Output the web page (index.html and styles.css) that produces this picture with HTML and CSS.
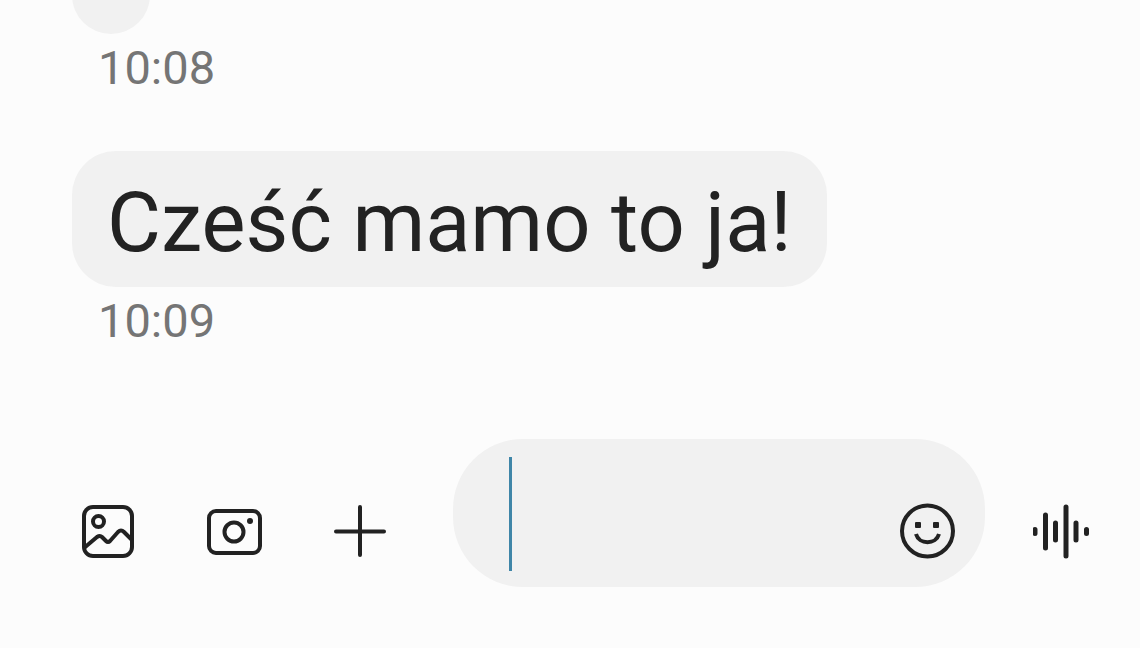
FILE: index.html
```html
<!DOCTYPE html>
<html lang="pl">
<head>
    <meta charset="UTF-8">
    <meta name="viewport" content="width=device-width, initial-scale=1.0">
    <title>Wiadomości</title>
    <link rel="stylesheet" href="styles.css">
</head>
<body>
    <!-- Messages -->
    <main class="messages">
        <div class="message">
            <div class="bubble bubble-small"></div>
            <time class="time" datetime="10:08">10:08</time>
        </div>
        <div class="message">
            <p class="bubble">Cześć mamo to ja!</p>
            <time class="time" datetime="10:09">10:09</time>
        </div>
    </main>

    <!-- Message bar -->
    <form class="composer">
        <div class="tools">
            <button class="icon-button" type="button" aria-label="Galeria">
                <svg viewBox="0 0 56 56" fill="none" stroke="currentColor" stroke-width="4" stroke-linejoin="round">
                    <rect x="4" y="4" width="48" height="49" rx="9"/>
                    <circle cx="18.500" cy="18.500" r="5.500"/>
                    <path d="M4 45l13-11q3-2 5 0l4 4q2 2 4 0l8-9q3-3 6 0l8 8"/>
                </svg>
            </button>
            <button class="icon-button" type="button" aria-label="Aparat">
                <svg viewBox="0 0 56 56" fill="none" stroke="currentColor" stroke-width="4">
                    <rect x="3" y="8" width="51" height="42" rx="7"/>
                    <circle cx="28" cy="29" r="9.500"/>
                    <circle cx="44" cy="18" r="3" fill="currentColor" stroke="none"/>
                </svg>
            </button>
            <button class="icon-button" type="button" aria-label="Dodaj">
                <svg viewBox="0 0 56 56" fill="none" stroke="currentColor" stroke-width="4" stroke-linecap="round">
                    <path d="M28 4v48M4 28.500h48"/>
                </svg>
            </button>
        </div>

        <div class="field">
            <span class="caret"></span>
            <input class="input" type="text" aria-label="Wiadomość">
            <button class="icon-button" type="button" aria-label="Emotikony">
                <svg viewBox="0 0 56 56" fill="none" stroke="currentColor" stroke-width="4">
                    <circle cx="28.500" cy="28" r="25.500"/>
                    <path d="M17 31c3 11 20 11 23 0"/>
                    <rect x="16" y="19" width="6" height="6" rx="1" fill="currentColor" stroke="none"/>
                    <rect x="34" y="19" width="6" height="6" rx="1" fill="currentColor" stroke="none"/>
                </svg>
            </button>
        </div>

        <button class="icon-button" type="button" aria-label="Wiadomość głosowa">
            <svg viewBox="0 0 56 56" fill="none" stroke="currentColor" stroke-width="5" stroke-linecap="round">
                <path d="M2 26.500v4M12.500 12v33M22.500 20v17M33 4v49M43 20v17M53.500 26.500v4"/>
            </svg>
        </button>
    </form>
</body>
</html>
```

FILE: styles.css
```css
* {
    box-sizing: border-box;
}
body {
    font-family: Roboto, sans-serif;
    margin: 0;
    min-height: 100vh;
    display: flex;
    flex-direction: column;
    overflow: hidden;
    background-color: #fcfcfc;
    color: #222222;
}
/* Messages */
.messages {
    display: flex;
    flex-direction: column;
    gap: 53px;
    padding: 0 72px;
}
.message {
    display: flex;
    flex-direction: column;
    align-items: flex-start;
    gap: 4px;
}
.bubble {
    margin: 0;
    padding: 24px 35px 16px;
    border-radius: 44px;
    background-color: #f1f1f1;
    font-size: 83px;
    line-height: 96px;
}
/* earlier message, scrolled under the top edge */
.bubble-small {
    width: 78px;
    height: 78px;
    margin-top: -44px;
    padding: 0;
}
.time {
    padding-left: 26px;
    font-size: 47px;
    line-height: 60px;
    color: #757575;
}
/* Message bar */
.composer {
    display: flex;
    align-items: flex-end;
    margin-top: 88px;
    padding: 0 51px 0 80px;
}
.tools {
    display: flex;
    gap: 70px;
    margin-right: 65px;
}
.icon-button {
    flex: none;
    width: 56px;
    height: 56px;
    margin-bottom: 28px;
    padding: 0;
    border: none;
    background: none;
    color: #222222;
    cursor: pointer;
}
.icon-button svg {
    display: block;
    width: 100%;
    height: 100%;
}
.field {
    flex: 1;
    min-width: 0;
    display: flex;
    align-items: flex-end;
    margin-right: 48px;
    padding: 18px 30px 0 56px;
    border-radius: 70px;
    background-color: #f1f1f1;
}
.caret {
    flex: none;
    width: 3px;
    height: 114px;
    margin-bottom: 16px;
    background-color: #3f86a8;
}
.input {
    flex: 1;
    min-width: 0;
    height: 114px;
    margin-bottom: 16px;
    padding: 0;
    border: none;
    outline: none;
    background: none;
    font-family: inherit;
    font-size: 83px;
    color: inherit;
}
```
